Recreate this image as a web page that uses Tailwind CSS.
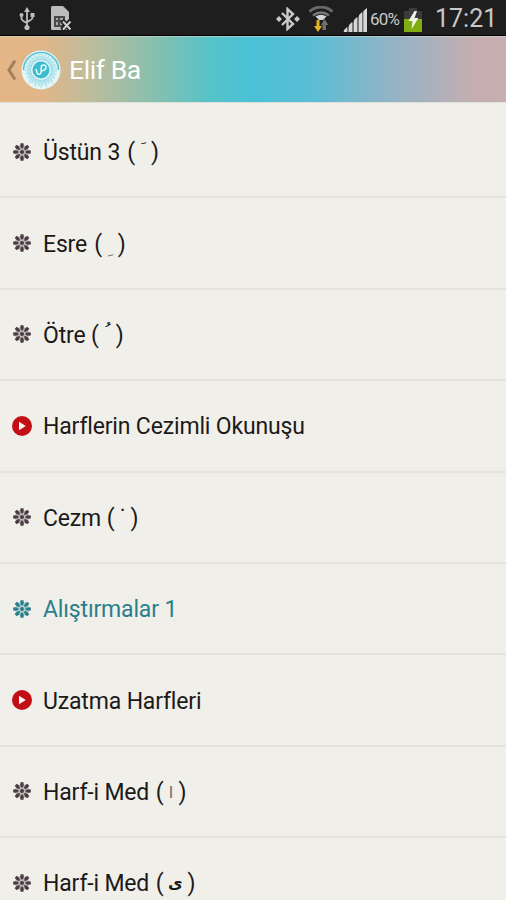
<!DOCTYPE html>
<html lang="tr">
<head>
<meta charset="utf-8">
<title>Elif Ba</title>
<script src="https://cdn.jsdelivr.net/npm/@tailwindcss/browser@4"></script>
</head>
<body class="w-[506px] h-[900px] overflow-hidden bg-[#f1efea] font-[Roboto,sans-serif] text-[#1c1a19]">
<svg class="hidden">
  <defs>
    <symbol id="flower" viewBox="0 0 20 20">
      <g fill="currentColor">
        <circle cx="10" cy="10" r="7" opacity=".3"/>
        <path id="p" d="M9.500 6.500 8.200 4 8.500 1.200h3L11.800 4 10.500 6.500Z"/>
        <use href="#p" transform="rotate(45 10 10)"/><use href="#p" transform="rotate(90 10 10)"/><use href="#p" transform="rotate(135 10 10)"/>
        <use href="#p" transform="rotate(180 10 10)"/><use href="#p" transform="rotate(225 10 10)"/><use href="#p" transform="rotate(270 10 10)"/><use href="#p" transform="rotate(315 10 10)"/>
        <circle cx="10" cy="10" r="4.500" fill="none" stroke="currentColor" stroke-width=".8" opacity=".4"/>
        <circle cx="10" cy="10" r="2"/>
      </g>
    </symbol>
    <symbol id="play" viewBox="0 0 20 20">
      <circle cx="10" cy="10" r="10" fill="#c20f15"/>
      <path d="M7 5.800v8.400l6.800-4.200Z" fill="#fff4f0"/>
    </symbol>
  </defs>
</svg>

<div class="h-9 bg-[#1e1e1e] border-b border-black flex items-center text-[#c8c8c8]">
  <svg class="ml-[19px] w-4 h-6 mt-[3px] shrink-0" viewBox="0 0 16 24" fill="none" stroke="#bdbdbd" stroke-width="1.8">
    <path d="M8 4v16M2.500 8v3.500q0 2 5.500 4.500M13.500 8v2.500q0 2-5.500 4.500"/>
    <path d="M8 0l3 5H5Z" fill="#bdbdbd" stroke="none"/><circle cx="8" cy="20.500" r="2.600" fill="#bdbdbd" stroke="none"/><circle cx="2.500" cy="8" r="2" fill="#bdbdbd" stroke="none"/><path d="M11.500 6h4v4h-4Z" fill="#bdbdbd" stroke="none"/>
  </svg>
  <svg class="ml-4 w-[21px] h-[25px] mt-[2px] shrink-0" viewBox="0 0 21 25">
    <path d="M0 1.500Q0 0 1.500 0H12l6 6v18H1.500Q0 24 0 22.500Z" fill="#bcbcbc"/>
    <path d="M3 10h11v11H3Z" fill="#4a4a4a"/>
    <path d="M5 12h2v2H5ZM9 12h3v2H9ZM5 16h2v3H5ZM9 16h2v3H9Z" fill="#aaa"/>
    <path d="M11 14.500l9 9.500M20 14.500L11 24" stroke="#1e1e1e" stroke-width="5"/>
    <path d="M12 15.500l7.500 8M19.500 15.500l-7.500 8" stroke="#d0d0d0" stroke-width="2"/>
  </svg>
  <svg class="ml-[204px] w-6 h-6 mt-[2px] shrink-0" viewBox="0 0 24 24" fill="none" stroke="#c9c9c9" stroke-width="2.400">
    <path d="M6 6l11 11-5.500 5V2L17 7 6 18"/><path d="M0 12l3-3 3 3-3 3ZM18 12l3-3 3 3-3 3Z" fill="#c9c9c9" stroke="none"/>
  </svg>
  <svg class="ml-2 w-[26px] h-[26px] mt-[3px] shrink-0" viewBox="0 0 26 26" fill="none">
    <path d="M1.500 5.500Q13-3.500 24.500 5.500" stroke="#686868" stroke-width="3"/>
    <path d="M5 9.500Q13 3.500 21 9.500" stroke="#777" stroke-width="2.600"/>
    <path d="M7.500 10.500Q13 7 18.500 10.500L15 14h-4Z" fill="#d5d5d5"/>
    <path d="M8.500 14h3v6H14l-4 6-4-6h2.500Z" fill="#e0b424"/>
    <path d="M14.500 24v-5H13l3.500-6 4 6H18v5Z" fill="#707070"/>
  </svg>
  <svg class="ml-[9px] w-6 h-6 mt-[4px] shrink-0" viewBox="0 0 24 24">
    <path d="M0 24 24 0v24Z" fill="#777"/>
    <path d="M1 24v-2l3-3v5ZM6 24v-7l3-3v10ZM11 24V12l3-3v15ZM16 24V7l3-3v20ZM20.500 24V3L24 0v24Z" fill="#d6d6d6"/>
  </svg>
  <span class="ml-[3px] w-[32px] text-[17px] leading-none tracking-[-0.8px] whitespace-nowrap mt-[4px]">60%</span>
  <svg class="ml-[2px] w-[18px] h-6 mt-[4px] shrink-0" viewBox="0 0 18 24">
    <path d="M5 0h8v3h5v21H0V3h5Z" fill="#3b3b3b"/><path d="M0 11h18v13H0Z" fill="#7fae12"/><path d="M10.500 3 4.500 13h4l-1 8 7-11h-4L13 3Z" fill="#f2f5ea"/>
  </svg>
  <span class="ml-[13px] text-[25px] leading-none mt-[2px]">17:21</span>
</div>

<header class="h-[66px] flex items-center bg-[linear-gradient(90deg,#e4b587_0%,#e2b688_8%,#c0bc9a_17%,#8dbfac_29%,#58c3c7_41%,#49c1d6_50%,#5cbdd4_62%,#8eb4c7_76%,#b0b0ba_87%,#c6aeb0_94%,#c6aeb1_100%)] border-t border-[#d0dcd7]/60">
  <svg class="ml-[6px] w-[11px] h-[20px] shrink-0" viewBox="0 0 11 20" fill="none" stroke="#a07f5f" stroke-width="3"><path d="M9 .5 3 10l6 9.500"/></svg>
  <svg class="ml-[4px] w-10 h-10 shrink-0" viewBox="0 0 40 40" fill="none">
    <circle cx="20" cy="20" r="19.500" fill="#e4f6f8"/>
    <path d="M2.500 20a17.500 17.500 0 0 1 35 0" stroke="#5cc5d5" stroke-width="1.700"/>
    <circle cx="20" cy="20" r="15" stroke="#b4e4ec" stroke-width="2" stroke-dasharray="2 1.500"/>
    <circle cx="20" cy="20" r="12" stroke="#b4e4ec" stroke-width="4"/>
    <circle cx="20" cy="20" r="10.500" stroke="#8fd6e2" stroke-dasharray="2 1"/>
    <circle cx="20" cy="20" r="8.500" fill="#3dbccf"/>
    <path d="M15 19l1.500 5q3 1 3.500-1.500l.5-7q4.500-1.500 4.500 1.500 0 3-4 4" stroke="#eafafa" stroke-width="1.500"/>
    <path d="M8 34l2-3M14 37l1-3M20 38v-3M26 37l-1-3M32 34l-2-3" stroke="#a9dfe8"/>
  </svg>
  <h1 class="ml-[8px] text-[26.500px] leading-none font-normal tracking-[-0.400px] text-white mt-[2px]">Elif Ba</h1>
</header>

<ul class="h-[838px] pt-[4px] text-[23px] tracking-[-0.160px] leading-none border-t border-[#dfdfd9] [&>li]:h-[91.400px] [&>li]:flex [&>li]:items-center [&>li]:border-b-2 [&>li]:border-[#e5e3de] [&>li]:pl-3 [&>li>svg]:w-5 [&>li>svg]:h-5 [&>li>svg]:mr-[11px] [&>li>span]:pt-[2px]">
  <li><svg class="text-[#493d43]"><use href="#flower"/></svg><span>Üstün 3 <span class="ml-[1.500px]">(</span><span class="inline-block w-[16px] text-center"><span class="relative -left-px -top-[5px] text-[18px] font-['DejaVu_Sans']">&nbsp;َ</span></span>)</span></li>
  <li><svg class="text-[#493d43]"><use href="#flower"/></svg><span>Esre <span class="ml-[1.500px]">(</span><span class="inline-block w-[16px] text-center"><span class="relative -left-px top-[2px] text-[18px] text-[#777] font-['DejaVu_Sans']">&nbsp;ِ</span></span>)</span></li>
  <li><svg class="text-[#493d43]"><use href="#flower"/></svg><span>Ötre <span>(</span><span class="inline-block w-[17px] text-center"><span class="relative -left-px -top-[5px] text-[18px] font-['DejaVu_Sans']">&nbsp;ُ</span></span>)</span></li>
  <li><svg><use href="#play"/></svg><span>Harflerin Cezimli Okunuşu</span></li>
  <li><svg class="text-[#493d43]"><use href="#flower"/></svg><span>Cezm (<span class="inline-block w-[16px] text-center">˙</span>)</span></li>
  <li class="text-[#2a7f8d]"><svg><use href="#flower"/></svg><span>Alıştırmalar 1</span></li>
  <li><svg><use href="#play"/></svg><span>Uzatma Harfleri</span></li>
  <li><svg class="text-[#493d43]"><use href="#flower"/></svg><span>Harf-i Med <span class="ml-px">(</span><span class="inline-block w-[15px] text-center text-[16px] text-[#666] font-['DejaVu_Sans']"><span class="relative -top-[2px]">ا</span></span>)</span></li>
  <li><svg class="text-[#493d43]"><use href="#flower"/></svg><span>Harf-i Med <span class="ml-px">(</span><span class="inline-block w-[24px] text-center text-[16px] font-bold font-['DejaVu_Sans']"><span class="relative -top-[3px]">ى</span></span>)</span></li>
</ul>
</body>
</html>
